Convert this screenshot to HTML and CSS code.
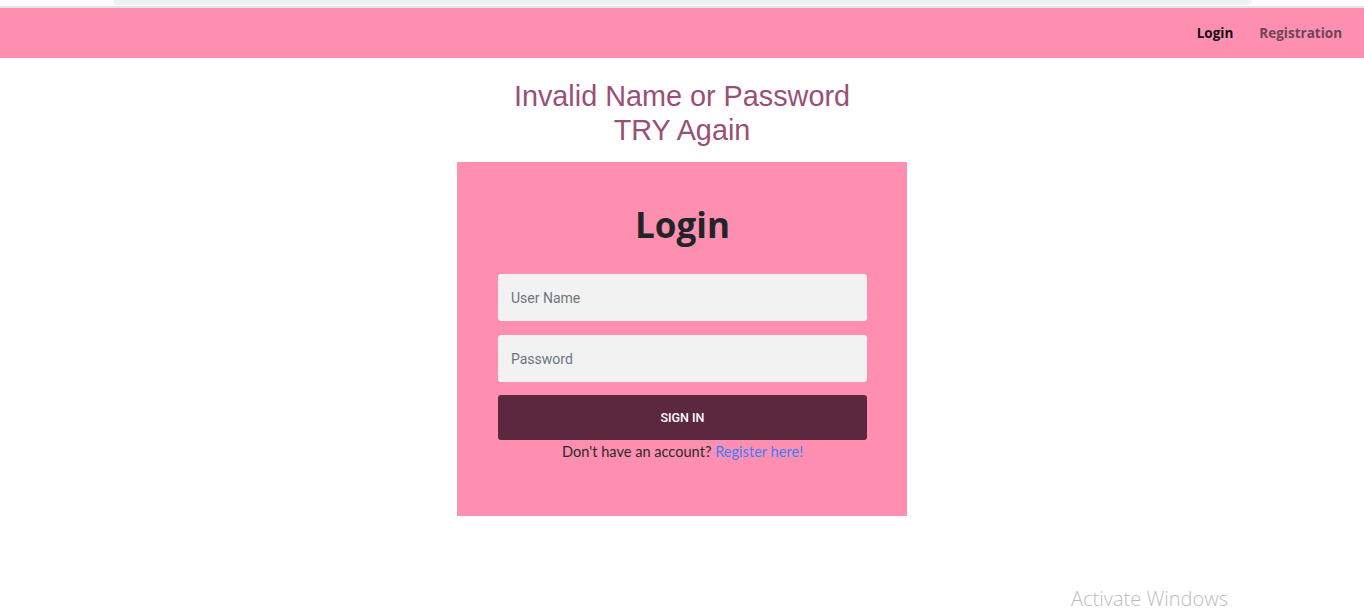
FILE: index.html
```html
<!DOCTYPE html>
<html lang="en">
<head>
  <meta charset="UTF-8">
  <meta name="viewport" content="width=device-width, initial-scale=1.0">
  <title>Login</title>
  <link rel="stylesheet" href="styles.css">
</head>
<body>
  <div class="top-strip">
    <div class="top-bar"></div>
  </div>
  <nav class="navbar">
    <a class="nav-link active" href="#">Login</a>
    <a class="nav-link" href="#">Registration</a>
  </nav>

  <h2 class="error-msg">Invalid Name or Password<br>TRY Again</h2>

  <div class="login-card">
    <h1>Login</h1>
    <form class="login-form">
      <input type="text" placeholder="User Name">
      <input type="password" placeholder="Password">
      <button type="submit">SIGN IN</button>
    </form>
    <p class="register">Don't have an account? <a href="#">Register here!</a></p>
  </div>

  <div class="watermark">Activate Windows</div>
</body>
</html>
```

FILE: styles.css
```css
body {
  margin: 0;
  padding: 0;
  font-family: "Open Sans", Arial, sans-serif;
  background-color: #fff;
  color: #212529;
}
.top-strip {
  height: 6px;
  border-bottom: 2px solid #e4e4e4;
  background-color: #fff;
}
.top-bar {
  height: 5px;
  margin: 0 112px 0 113px;
  background-color: #f0f1f3;
  border-radius: 0 0 6px 6px;
}
.navbar {
  height: 50px;
  background-color: #ff8fb0;
  display: flex;
  justify-content: flex-end;
  align-items: center;
  padding-right: 9px;
}
.nav-link {
  font-size: 13.5px;
  font-weight: 700;
  color: #6e4657;
  text-decoration: none;
  padding: 0 13px;
}
.nav-link.active {
  color: #111;
}
.error-msg {
  font-family: "Liberation Sans", Arial, sans-serif;
  font-weight: 400;
  font-size: 28.8px;
  line-height: 34px;
  color: #9a4f76;
  text-align: center;
  margin: 21px 0 15px;
}
.login-card {
  width: 450px;
  height: 354px;
  box-sizing: border-box;
  margin: 0 auto;
  padding: 38px 40px 0 41px;
  background-color: #ff8fb0;
}
.login-card h1 {
  margin: 0 0 24px;
  text-align: center;
  font-size: 35px;
  font-weight: 700;
  line-height: 50px;
  color: #212529;
}
.login-form {
  display: flex;
  flex-direction: column;
}
.login-form input {
  height: 47px;
  box-sizing: border-box;
  border: none;
  border-radius: 3px;
  background-color: #f2f2f2;
  padding: 0 13px;
  font-family: Roboto, sans-serif;
  font-size: 14px;
  color: #495057;
  margin-bottom: 14px;
}
.login-form input:last-of-type {
  margin-bottom: 13px;
}
.login-form input::placeholder {
  color: #6c757d;
}
.login-form button {
  height: 45px;
  border: none;
  border-radius: 3px;
  background-color: #5c2840;
  color: #fff;
  font-family: Roboto, sans-serif;
  font-size: 12.5px;
  font-weight: 500;
  cursor: pointer;
}
.register {
  margin: 3px 0 0;
  text-align: center;
  font-family: Lato, sans-serif;
  font-size: 14.6px;
  color: #2b2b2b;
}
.register a {
  color: #3b7dfc;
  text-decoration: none;
}
.watermark {
  position: absolute;
  left: 1071px;
  top: 585px;
  font-family: "Open Sans", sans-serif;
  font-weight: 300;
  font-size: 20px;
  color: #bdbdbd;
}
```
